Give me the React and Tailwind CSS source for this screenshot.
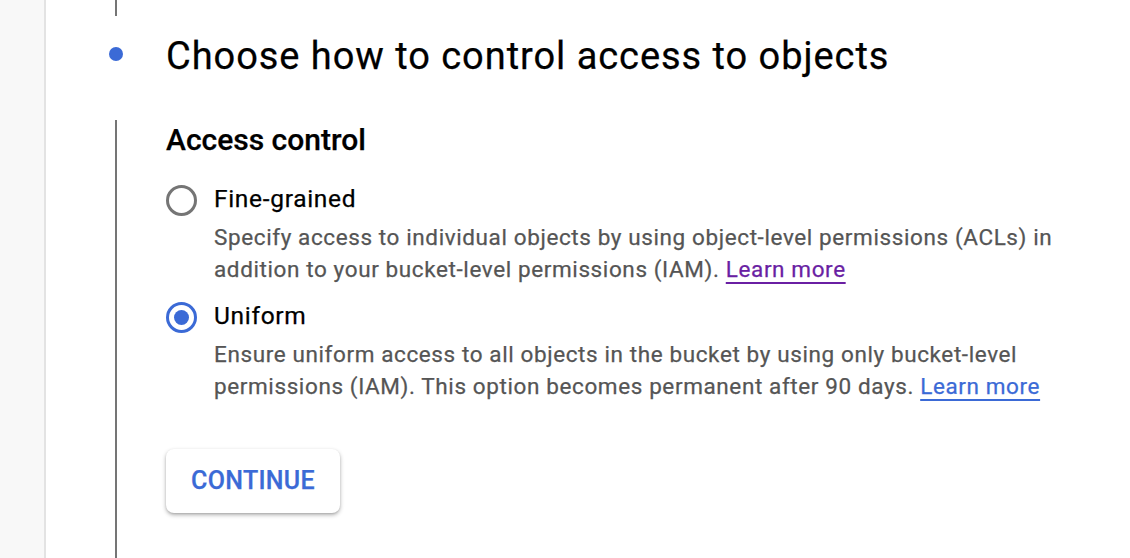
import React, { useState } from "react";

const options = [
  {
    id: "fine",
    label: "Fine-grained",
    desc: "Specify access to individual objects by using object-level permissions (ACLs) in addition to your bucket-level permissions (IAM).",
    visited: true,
  },
  {
    id: "uniform",
    label: "Uniform",
    desc: "Ensure uniform access to all objects in the bucket by using only bucket-level permissions (IAM). This option becomes permanent after 90 days.",
    visited: false,
  },
];

function Radio({ checked }) {
  return (
    <span
      className={
        "flex h-[31px] w-[31px] shrink-0 items-center justify-center rounded-full border-[3.5px] " +
        (checked ? "border-[#3b6ad6]" : "border-[#757575]")
      }
    >
      {checked && <span className="h-[15px] w-[15px] rounded-full bg-[#3b6ad6]" />}
    </span>
  );
}

export default function App() {
  const [value, setValue] = useState("uniform");

  return (
    <div className="flex h-[558px] w-[1130px] overflow-hidden bg-white font-['Roboto',sans-serif] [-webkit-text-stroke:0.25px_currentColor]">
      <div className="w-[46px] shrink-0 border-r-2 border-[#e3e3e3] bg-[#f8f8f8]" />

      <div className="flex flex-1 flex-col">
        {/* step header */}
        <div className="flex h-[120px] shrink-0 pl-[63px]">
          <div className="flex w-[14px] flex-col items-center">
            <div className="h-[16px] w-[2px] bg-[#757575]" />
            <div className="mt-[31px] h-[14px] w-[14px] rounded-full bg-[#3b6ad6]" />
          </div>
          <h1 className="ml-[43px] pt-[34px] text-[38px] leading-[44px] font-normal tracking-[0.025em] text-black">
            Choose how to control access to objects
          </h1>
        </div>

        {/* step body */}
        <div className="flex flex-1 pl-[63px]">
          <div className="flex w-[14px] justify-center">
            <div className="w-[2px] bg-[#757575]" />
          </div>
          <div className="ml-[43px] pt-[2px]">
            <h2 className="text-[30px] leading-[36px] font-medium text-black">Access control</h2>

            <div className="mt-[26px] flex flex-col gap-[16px]">
              {options.map((o) => (
                <label key={o.id} className="flex cursor-pointer gap-[17px]" onClick={() => setValue(o.id)}>
                  <div className="flex h-[30px] items-center pt-[2px]">
                    <Radio checked={value === o.id} />
                  </div>
                  <div>
                    <div className="text-[24.5px] leading-[30px] tracking-[0.028em] text-black">{o.label}</div>
                    <p className="mt-[8px] w-[870px] text-[22.5px] leading-[31.5px] tracking-[0.027em] text-[#555]">
                      {o.desc}{" "}
                      <a
                        href="#"
                        className={
                          "underline decoration-2 underline-offset-[5px] " +
                          (o.visited ? "text-[#6a1fa3]" : "text-[#3b6ad6]")
                        }
                      >
                        Learn more
                      </a>
                    </p>
                  </div>
                </label>
              ))}
            </div>

            <button className="mt-[47px] h-[64px] w-[174px] rounded-[8px] bg-white text-[25px] font-medium tracking-[0.3px] text-[#3b6ad6] shadow-[0_2px_4px_rgba(0,0,0,0.3),0_1px_2px_rgba(0,0,0,0.1)]">
              CONTINUE
            </button>
          </div>
        </div>
      </div>
    </div>
  );
}
